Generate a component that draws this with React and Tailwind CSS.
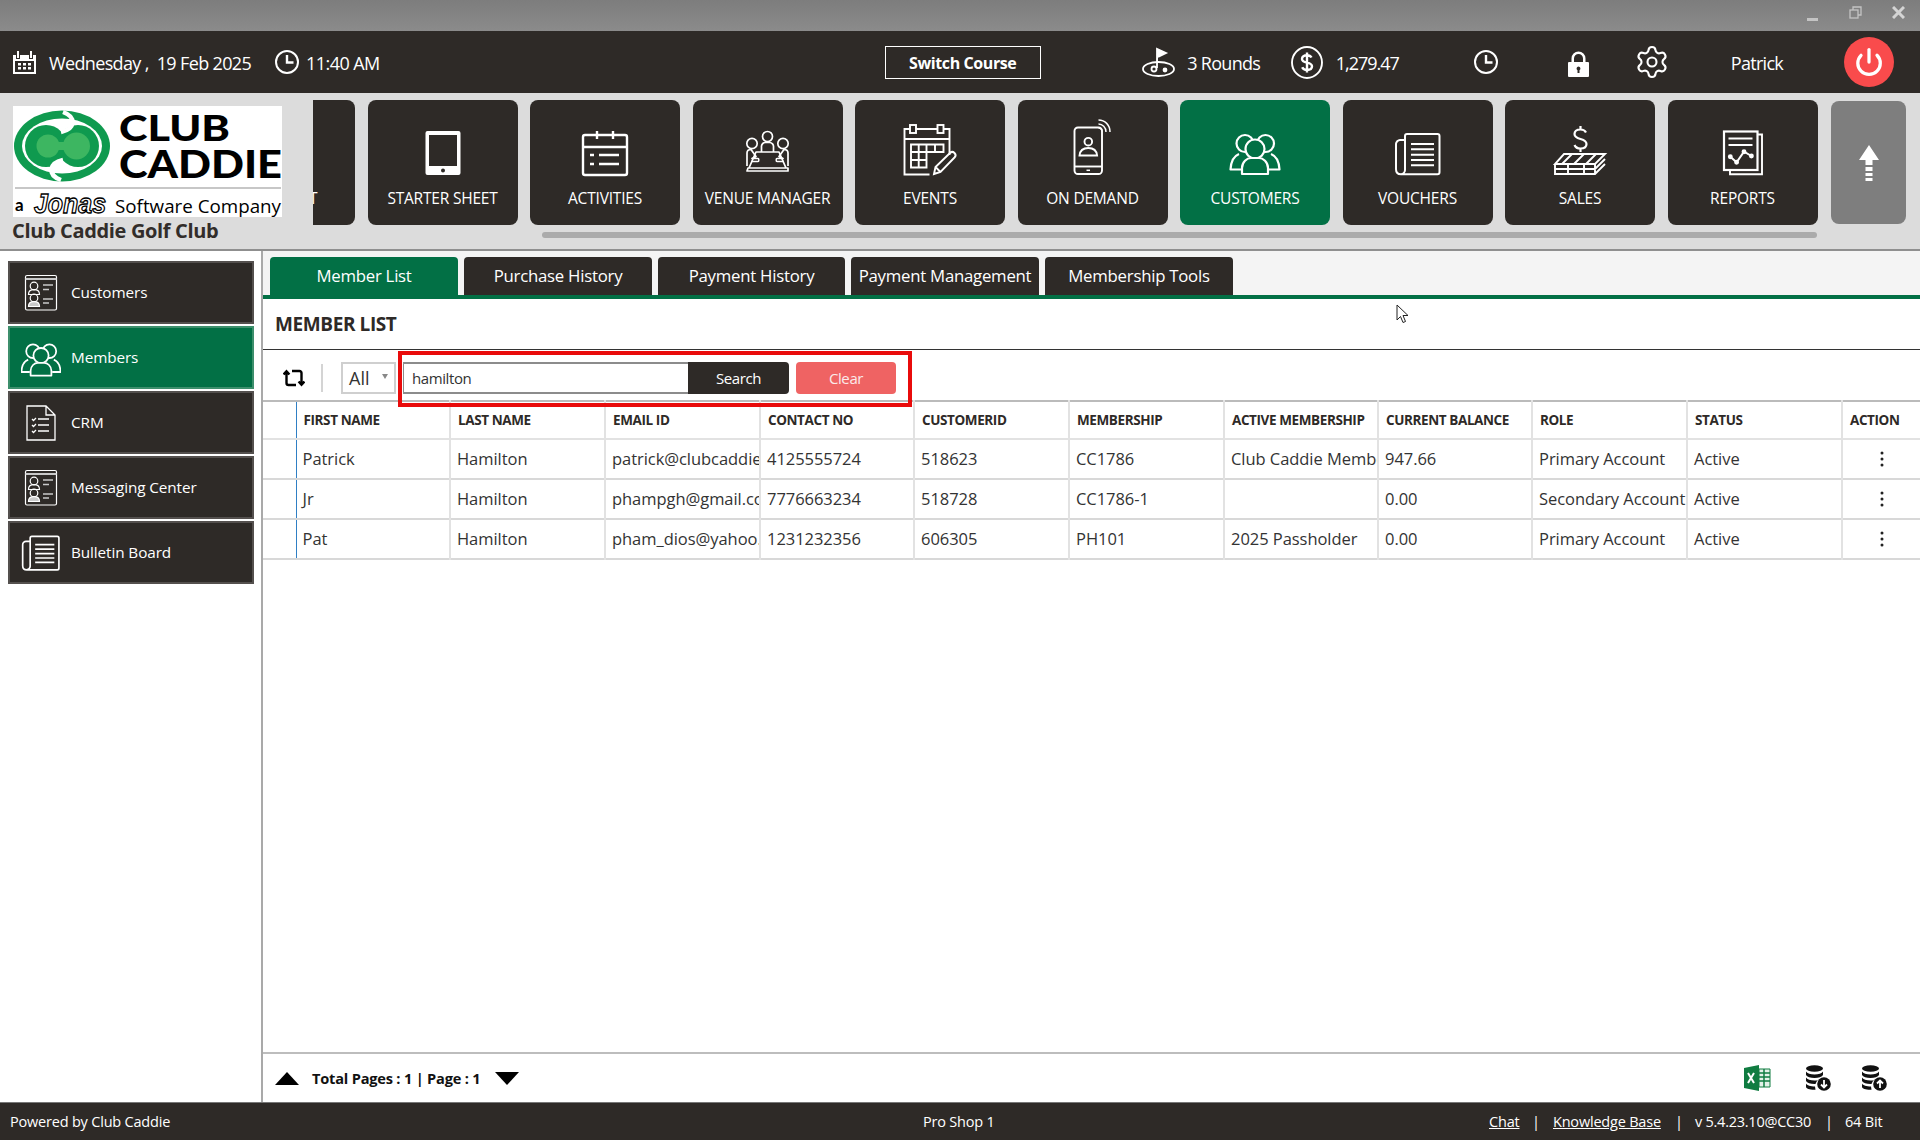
import { Power, Settings } from 'lucide-react';

const dark = 'bg-[#2e2a27]';

// Icones do menu principal (caixa de 60x60)
const StarterIcon = () => (
  <svg viewBox="0 0 60 60" className="w-[60px] h-[60px]" fill="white">
    <path fillRule="evenodd" d="M14.5 13h31a2 2 0 0 1 2 2v40a2 2 0 0 1-2 2h-31a2 2 0 0 1-2-2V15a2 2 0 0 1 2-2zM16 17v31h28V17zM30 50.5a2 2 0 1 0 0 4a2 2 0 0 0 0-4z" />
  </svg>
);

const ActivitiesIcon = () => (
  <svg viewBox="0 0 60 60" className="w-[60px] h-[60px]" fill="none" stroke="white" strokeWidth="2.4">
    <rect x="8" y="17" width="44" height="40" rx="2" />
    <path d="M8 29h44M22 13v8M38 13v8M24 37h20M24 46h20" />
    <path d="M15 37h4M15 46h4" />
  </svg>
);

const VenueIcon = () => (
  <svg viewBox="0 0 60 60" className="w-[60px] h-[60px]" fill="none" stroke="white" strokeWidth="1.7" strokeLinejoin="round">
    <circle cx="29.5" cy="18.5" r="5" />
    <circle cx="14" cy="25.5" r="5.2" />
    <circle cx="45" cy="25.5" r="5.2" />
    <path d="M23.5 34v-5a4 4 0 0 1 4-4.5h4a4 4 0 0 1 4 4.5v5" />
    <path d="M18 34h23l7 16H11zM10 50h40v3H9z" />
    <path d="M9 48V35c0-2 1.5-3.5 4-3.5l5 7-4 2h6c1 0 1 3 0 3h-7M50 48V35c0-2-1.5-3.5-4-3.5l-5 7 4 2h-6c-1 0-1 3 0 3h7" />
  </svg>
);

const EventsIcon = () => (
  <svg viewBox="0 0 60 60" className="w-[60px] h-[60px]" fill="none" stroke="white" strokeWidth="1.9">
    <path d="M10 11H4.5v45.5h25M16 11h21M44 11h5.5v26M4.5 21h45" />
    <rect x="10" y="7" width="6" height="8" />
    <rect x="37.5" y="7" width="6" height="8" />
    <path d="M11 26.5h32.5v7.5H26.5v15.5H11zM11 34h15.5M11 42h15.5M18.7 26.5v23M26.5 26.5v7.5M35 26.5v7.5" />
    <path d="M34 56l1.5-7L50 35c1.5-1.5 3-1.5 4.5 0s1.5 3 0 4.5L40.5 54zM36 49.5l4.5 4.5" />
  </svg>
);

const OnDemandIcon = () => (
  <svg viewBox="0 0 60 60" className="w-[60px] h-[60px]" fill="none" stroke="white" strokeWidth="1.9">
    <rect x="11.5" y="9.5" width="27.5" height="46.5" rx="3.5" />
    <path d="M11.5 48.500h27.5" />
    <path d="M23.5 52.300h3.5" strokeWidth="1.5" />
    <circle cx="25.3" cy="23.7" r="3.8" />
    <path d="M16.5 37.5c.5-5 4-7.5 8.8-7.5s8.300 2.500 8.800 7.500z" />
    <path d="M35.500 2c6.500 0 11.500 5 11.500 12M35.500 6c4 0 7.500 3.500 7.500 8M35.500 10c2 0 3.500 1.500 3.500 3.500" strokeWidth="1.5" />
  </svg>
);

const CustomersIcon = ({ className = 'w-[60px] h-[60px]', viewBox = '0 0 60 60' }) => (
  <svg viewBox={viewBox} className={className} fill="none" stroke="white" strokeWidth="2.2" strokeLinejoin="round">
    <circle cx="20" cy="25.5" r="8.5" />
    <circle cx="40.5" cy="25.5" r="8.5" />
    <path d="M14 36c-5 2-8 6-8.500 15.500H16M46 36c5 2 8 6 8.500 15.500H44" />
    <circle cx="30" cy="31" r="9.5" fill="#027045" />
    <path d="M17 56v-6c0-6 5-10 9-10h8c4 0 9 4 9 10v6z" fill="#027045" />
  </svg>
);

const VouchersIcon = ({ className = 'w-[60px] h-[60px]', viewBox = '0 0 60 60' }) => (
  <svg viewBox={viewBox} className={className} fill="none" stroke="white" strokeWidth="2">
    <path d="M17 22V18a2 2 0 0 1 2-2h30.500a2 2 0 0 1 2 2v36.300a2 2 0 0 1-2 2H13c-3 0-5-2-5-5V26c0-2 2-4 4-4h5v30c0 2-2 4-4 4.300" />
    <path d="M23 26h23M23 31.300h23M23 36.700h23M23 42h23M23 47.300h23" />
  </svg>
);

const SalesIcon = () => (
  <svg viewBox="0 0 60 60" className="w-[60px] h-[60px]" fill="none" stroke="white" strokeWidth="1.9">
    <path d="M36 14.500c-1-2-3-3-5.500-3-3.500 0-6 1.500-6 4.500 0 6.500 12 3.500 12 10 0 3-2.500 4.500-6 4.500-3 0-5-1-6-3.500M30.500 8v3.500M30.500 30.500v3.500" strokeWidth="2.2" />
    <path d="M14 36h41L45 46H5zM22 36l-10 10M34 36l-10 10M46 36l-10 10" />
    <path d="M5 46v5h40l10-10M5 51v5h40l10-10M18 46v10M34 46v10M45 46v10" />
  </svg>
);

const ReportsIcon = () => (
  <svg viewBox="0 0 60 60" className="w-[60px] h-[60px]" fill="none" stroke="white" strokeWidth="1.9">
    <rect x="11" y="13.5" width="33.5" height="38.5" strokeWidth="2.2" />
    <path d="M44.500 16.500h4.500v39.700h-32v-4" />
    <path d="M15.500 20.500h24M15.500 27h24" />
    <path d="M17.300 38.700l6.300 5.600L31 33.700l7.400 4.300" strokeWidth="2" />
    <circle cx="17.3" cy="38.7" r="1.5" fill="white" />
    <circle cx="23.6" cy="44.3" r="1.5" fill="white" />
    <circle cx="31" cy="33.7" r="1.5" fill="white" />
    <circle cx="38.4" cy="38" r="1.5" fill="white" />
  </svg>
);

const navItems = [
  { label: 'STARTER SHEET', Icon: StarterIcon },
  { label: 'ACTIVITIES', Icon: ActivitiesIcon },
  { label: 'VENUE MANAGER', Icon: VenueIcon },
  { label: 'EVENTS', Icon: EventsIcon },
  { label: 'ON DEMAND', Icon: OnDemandIcon },
  { label: 'CUSTOMERS', Icon: CustomersIcon, active: true },
  { label: 'VOUCHERS', Icon: VouchersIcon },
  { label: 'SALES', Icon: SalesIcon },
  { label: 'REPORTS', Icon: ReportsIcon },
];

// Icones da barra lateral
const CardIcon = () => (
  <svg viewBox="0 0 40 40" className="w-10 h-10" fill="none" stroke="white" strokeWidth="1.2">
    <rect x="4.5" y="2.5" width="31" height="34.5" rx="1.5" />
    <path d="M4.500 6h31" strokeWidth="2" stroke="#c9c9c9" />
    <circle cx="13" cy="13" r="3.8" />
    <path d="M7.500 21.500c0-3.500 2-4.800 5.500-4.800s5.500 1.300 5.500 4.800z" />
    <circle cx="13" cy="25" r="3.8" />
    <path d="M7.500 33.500c0-3.500 2-4.800 5.500-4.800s5.500 1.300 5.500 4.800z" fill="#c9c9c9" />
    <path d="M22 12h10M22 16.500h6" strokeWidth="1.5" stroke="#c9c9c9" />
    <path d="M22 26h10M22 30h6" strokeWidth="1.5" stroke="#c9c9c9" />
  </svg>
);

const CrmIcon = () => (
  <svg viewBox="0 0 40 40" className="w-10 h-10" fill="none" stroke="white" strokeWidth="1.3">
    <path d="M6 3h19l9 9v25H6zM25 3v9h9" />
    <path d="M17 16h11M17 22h11M17 28h11" />
    <path d="M11 16l1.500 1.500 2.500-2.500M11 22l1.500 1.500 2.500-2.500M11 28l1.500 1.500 2.500-2.500" />
  </svg>
);

const sideItems = [
  { label: 'Customers', icon: <CardIcon /> },
  { label: 'Members', icon: <CustomersIcon className="w-10 h-10" viewBox="5 9 50 50" />, active: true },
  { label: 'CRM', icon: <CrmIcon /> },
  { label: 'Messaging Center', icon: <CardIcon /> },
  { label: 'Bulletin Board', icon: <VouchersIcon className="w-10 h-10" viewBox="6 12 48 48" /> },
];

const tabs = [
  { label: 'Member List', w: 'w-[188px]', active: true },
  { label: 'Purchase History', w: 'w-[188px]' },
  { label: 'Payment History', w: 'w-[187px]' },
  { label: 'Payment Management', w: 'w-[188px]' },
  { label: 'Membership Tools', w: 'w-[188px]' },
];

const columns = [
  { label: 'FIRST NAME', w: 'w-[154px]' },
  { label: 'LAST NAME', w: 'w-[155px]' },
  { label: 'EMAIL ID', w: 'w-[155px]' },
  { label: 'CONTACT NO', w: 'w-[154px]' },
  { label: 'CUSTOMERID', w: 'w-[155px]' },
  { label: 'MEMBERSHIP', w: 'w-[155px]' },
  { label: 'ACTIVE MEMBERSHIP', w: 'w-[154px]' },
  { label: 'CURRENT BALANCE', w: 'w-[154px]' },
  { label: 'ROLE', w: 'w-[155px]' },
  { label: 'STATUS', w: 'w-[155px]' },
  { label: 'ACTION', w: 'w-[78px]' },
];

const rows = [
  ['Patrick', 'Hamilton', 'patrick@clubcaddie.com', '4125555724', '518623', 'CC1786', 'Club Caddie Membership', '947.66', 'Primary Account', 'Active'],
  ['Jr', 'Hamilton', 'phampgh@gmail.com', '7776663234', '518728', 'CC1786-1', '', '0.00', 'Secondary Account', 'Active'],
  ['Pat', 'Hamilton', 'pham_dios@yahoo.com', '1231232356', '606305', 'PH101', '2025 Passholder', '0.00', 'Primary Account', 'Active'],
];

const ClockIcon = () => (
  <svg viewBox="0 0 24 24" className="w-6 h-6" fill="none" stroke="white" strokeWidth="2">
    <circle cx="12" cy="12" r="11" />
    <path d="M12 5v7.500h6.500" strokeWidth="2.4" />
  </svg>
);

const DbIcon = ({ up }) => (
  <svg viewBox="0 0 26 26" className="w-[26px] h-[26px]">
    <ellipse cx="9.5" cy="3.5" rx="8.5" ry="3.2" fill="#111" />
    <path d="M1 6.500c1 2 4.500 3 8.500 3s7.500-1 8.500-3v3.500c-1 2-4.500 3-8.500 3S2 12 1 10zM1 12.500c1 2 4.500 3 8.500 3 1.500 0 2.500 0 3.500-.5-1 1-2 2.500-2.500 4H9.500c-4 0-7.500-1-8.500-3zM1 18.500c1 2 4.500 3 9 3l.5 3.200c-5 .3-9.500-1-9.500-3z" fill="#111" />
    <circle cx="19" cy="19" r="6.8" fill="#111" />
    <path d={up ? 'M19 23v-7M16 18.500l3-3 3 3' : 'M19 15v7M16 19.500l3 3 3-3'} stroke="white" strokeWidth="1.8" fill="none" />
  </svg>
);

export default function App() {
  return (
    <div className="w-[1920px] h-[1140px] flex flex-col overflow-hidden relative bg-white font-['Open_Sans',sans-serif]">
      {/* barra da janela */}
      <div className="h-[31px] shrink-0 bg-gradient-to-b from-[#7d7d7d] to-[#8b8b8b] flex items-center justify-end">
        <div className="w-[11px] h-[3px] bg-[#c4c4c4] mt-[7px]"></div>
        <svg viewBox="0 0 13 13" className="w-[13px] h-[13px] ml-[31px] mb-[7px]" fill="none" stroke="#c4c4c4" strokeWidth="1.3">
          <rect x="1" y="4" width="8" height="8" />
          <path d="M4 4V1h8v8H9" />
        </svg>
        <svg viewBox="0 0 13 13" className="w-[13px] h-[13px] ml-[30px] mr-[15px] mb-[7px]" fill="none" stroke="#d4d4d4" strokeWidth="3">
          <path d="M1 1l11 11M12 1L1 12" />
        </svg>
      </div>

      {/* cabecalho */}
      <div className={`h-[62px] shrink-0 ${dark} text-white flex items-center text-[18px] relative`}>
        <svg viewBox="0 0 23 24" className="w-[23px] h-6 ml-[13px]" fill="white">
          <path fillRule="evenodd" d="M0 5h3v4h4V5h9v4h4V5h3v19H0zM2 11v11h19V11zM4 1h2v7H4zM17 1h2v7h-2z" />
          <path d="M5 13h3v2.500H5zM10 13h3v2.500h-3zM15 13h3v2.500h-3zM5 17h3v2.500H5zM10 17h3v2.500h-3zM15 17h3v2.500h-3z" />
        </svg>
        <span className="ml-[13px] w-[226px] pt-[2px] whitespace-pre tracking-[-0.65px]">Wednesday ,  19 Feb 2025</span>
        <ClockIcon />
        <span className="ml-[7px] pt-[2px] tracking-[-0.55px]">11:40 AM</span>
        <button className="ml-[505px] w-[156px] h-[33px] pt-[1px] border border-white text-[16px] font-bold tracking-[-0.4px]">Switch Course</button>
        <svg viewBox="0 0 33 30" className="w-[33px] h-[30px] ml-[101px]" fill="none" stroke="white" strokeWidth="1.8">
          <path d="M15 21V2l9 4-8 4" fill="white" />
          <ellipse cx="16.5" cy="22" rx="15.5" ry="7" />
          <circle cx="12" cy="22" r="2.5" />
          <circle cx="23" cy="23" r="1.5" fill="white" />
        </svg>
        <span className="ml-[12.5px] w-[103.5px] pt-[2px] tracking-[-0.7px]">3 Rounds</span>
        <svg viewBox="0 0 32 33" className="w-8 h-[33px]" fill="none" stroke="white">
          <ellipse cx="16" cy="16.5" rx="15" ry="15.5" strokeWidth="1.9" />
          <path d="M20.500 11.500c-.8-1.500-2.500-2.300-4.500-2.300-3 0-5 1.300-5 3.700 0 5 10 2.500 10 7.400 0 2.400-2 3.700-5 3.700-2.200 0-4-.9-4.800-2.700M16 6.500v20" strokeWidth="2.4" />
        </svg>
        <span className="ml-[13px] w-[138px] pt-[2px] tracking-[-1px]">1,279.47</span>
        <ClockIcon />
        <svg viewBox="0 0 21 26" className="w-[21px] h-[26px] ml-[70px] mt-[3px]" fill="white">
          <path fillRule="evenodd" d="M1 11h2.500V7.500a7 7 0 0 1 14 0V11H20a1 1 0 0 1 1 1v13a1 1 0 0 1-1 1H1a1 1 0 0 1-1-1V12a1 1 0 0 1 1-1zM6 11h9V7.500a4.500 4.500 0 0 0-9 0zM10.500 15.500a2 2 0 0 0-1 3.700V22h2v-2.800a2 2 0 0 0-1-3.700z" />
        </svg>
        <Settings size={36} strokeWidth={1.4} className="ml-[45px]" />
        <span className="ml-[61px] w-[113.5px] pt-[2px] tracking-[-0.7px]">Patrick</span>
        <div className="w-[50px] h-[50px] rounded-full bg-[#f94b4c] flex items-center justify-center">
          <Power size={30} strokeWidth={2.6} />
        </div>
      </div>

      {/* menu principal */}
      <div className="h-[158px] shrink-0 bg-[#dcdcdc] border-b-2 border-[#8f8f8f] flex">
        <div className="w-[313px] shrink-0 pl-[13px] pt-[13px]">
          <svg viewBox="0 0 269 111" className="w-[269px] h-[111px] bg-white block">
            <ellipse cx="49" cy="40" rx="48" ry="35.5" fill="#0f9a4f" />
            <ellipse cx="49" cy="40" rx="40" ry="27.5" fill="white" />
            <circle cx="33" cy="40" r="21" fill="#0f9a4f" />
            <circle cx="65" cy="40" r="21" fill="#0f9a4f" />
            <circle cx="35" cy="40" r="11.5" fill="#3db661" />
            <circle cx="63.5" cy="40" r="13.5" fill="#3db661" />
            <path d="M35 36h28v8H35z" fill="#3db661" />
            <path d="M50 6c14 5 12 17-2 20M48 74c-14-5-12-17 2-20" fill="none" stroke="white" strokeWidth="4.5" />
            <text x="106" y="34.5" fontFamily="Lato, sans-serif" fontWeight="900" fontSize="36" textLength="111" lengthAdjust="spacingAndGlyphs">CLUB</text>
            <text x="106" y="72" fontFamily="Lato, sans-serif" fontWeight="900" fontSize="37" textLength="163" lengthAdjust="spacingAndGlyphs">CADDIE</text>
            <path d="M2 82h266" stroke="#b5b5b5" strokeWidth="1.6" />
            <text x="2" y="105" fontFamily="Lato, sans-serif" fontWeight="700" fontSize="17">a</text>
            <text x="21" y="107" fontFamily="Liberation Sans, sans-serif" fontStyle="italic" fontWeight="700" fontSize="27" fill="white" stroke="black" strokeWidth="1.3" textLength="72" lengthAdjust="spacingAndGlyphs">Jonas</text>
            <text x="102" y="107" fontFamily="Open Sans, sans-serif" fontSize="17.5" textLength="166" lengthAdjust="spacingAndGlyphs">Software Company</text>
          </svg>
          <div className="mt-[2px] ml-[-1px] text-[20px] leading-[24px] font-bold text-[#322d2a] tracking-[-0.35px] whitespace-nowrap">Club Caddie Golf Club</div>
        </div>

        <div className="pt-[7px]">
          <div className="flex gap-[12.5px]">
            <div className={`w-[42px] h-[125px] ${dark} rounded-r-lg overflow-hidden text-white text-[15.5px] pt-[87px]`}>
              <span className="block ml-[-4px] leading-[22px]">T</span>
            </div>
            {navItems.map(({ label, Icon, active }) => (
              <div
                key={label}
                className={`w-[150px] h-[125px] rounded-lg flex flex-col items-center pt-[18px] ${active ? 'bg-[#027045]' : dark}`}
              >
                <Icon />
                <span className="mt-[9px] text-[15.5px] leading-[22px] text-white tracking-[-0.2px] whitespace-nowrap">{label}</span>
              </div>
            ))}
          </div>
          {/* barra de rolagem */}
          <div className="ml-[229px] mt-[7px] w-[1275px] h-[6px] rounded-full bg-[#ababab]"></div>
        </div>

        <div className="ml-[13.5px] mt-[8px] w-[75px] h-[123px] rounded-lg bg-[#7e7e7e] flex items-center justify-center">
          <svg viewBox="0 0 20 36" className="w-5 h-9" fill="white">
            <path d="M10 0l10 15h-6.500v5h-7v-5H0zM6.500 22h7v4h-7zM6.500 28h7v3h-7zM6.500 33h7v3h-7z" />
          </svg>
        </div>
      </div>

      <div className="flex-1 min-h-0 flex">
        {/* barra lateral */}
        <div className="w-[263px] shrink-0 border-r-2 border-[#a9a9a9] pl-2 pt-[10px] flex flex-col gap-[2px]">
          {sideItems.map((item) => (
            <div
              key={item.label}
              className={`w-[246px] h-[63px] flex items-center border-2 pl-[11px] text-[15.3px] tracking-[-0.1px] ${item.active ? 'bg-[#027045] border-[#3d8f6c]' : `${dark} border-[#54504e]`}`}
            >
              {item.icon}
              <span className="ml-[10px] text-white">{item.label}</span>
            </div>
          ))}
        </div>

        <div className="flex-1 min-w-0 flex flex-col">
          {/* abas */}
          <div className="h-[48px] shrink-0 bg-[#f4f4f4] border-b-4 border-[#027045] pt-[6px] pl-[7px] flex gap-[6px]">
            {tabs.map((t) => (
              <div key={t.label} className={`${t.w} h-[38px] rounded-t flex items-center justify-center text-white text-[16.8px] tracking-[-0.25px] whitespace-nowrap ${t.active ? 'bg-[#027045]' : dark}`}>
                {t.label}
              </div>
            ))}
          </div>

          <div className="h-[51px] shrink-0 border-b border-[#333] pl-3 flex items-center text-[19px] font-bold text-[#2e2a27] tracking-[-0.4px]">
            MEMBER LIST
          </div>

          {/* ferramentas */}
          <div className="h-[50px] shrink-0 pt-[6px] flex items-center">
            <svg viewBox="0 0 22 18" className="ml-[20px] w-[22px] h-[18px]" fill="none" stroke="black" strokeWidth="2.4">
              <path d="M3.500 3v11a2 2 0 0 0 2 2H13M.6 5.500l2.900-3.300 2.900 3.300" />
              <path d="M18.500 15V4a2 2 0 0 0-2-2H9M15.600 12.500l2.900 3.300 2.900-3.300" />
            </svg>
            <div className="ml-[16px] w-[2px] h-[28px] bg-[#d4d4d4]"></div>
            <div className="ml-[18px] w-[55px] h-[32px] border-2 border-[#cfcfcf] flex items-center pl-[6px] text-[18px] text-[#333] relative">
              All
              <span className="absolute right-[6px] top-[10px] w-0 h-0 border-l-[3.5px] border-r-[3.5px] border-t-[5px] border-l-transparent border-r-transparent border-t-[#888]"></span>
            </div>
            <div className="ml-[7px] flex h-[32px] relative">
              <div className="w-[285px] border-y-2 border-l border-[#8c8c8c] pl-[8px] flex items-center text-[15px] text-[#333] tracking-[-0.4px]">hamilton</div>
              <button className={`w-[101px] ${dark} rounded-r text-white text-[15px] tracking-[-0.4px]`}>Search</button>
              <button className="ml-[7px] w-[100px] bg-[#ef6363] rounded text-[#fbeaea] text-[15px] tracking-[-0.4px]">Clear</button>
              {/* destaque vermelho */}
              <div className="absolute left-[-5px] top-[-11px] w-[514px] h-[56px] border-[4px] border-[#e90b0b] pointer-events-none"></div>
            </div>
          </div>

          {/* tabela */}
          <table className="table-fixed w-[1657px] border-t-2 border-[#bbb] text-[#333]">
            <thead>
              <tr className="h-[38px] border-b-2 border-[#e2e2e2]">
                <th className="w-[33px] border-r border-[#2f7fc4] p-0"></th>
                {columns.map((c) => (
                  <th key={c.label} className={`${c.w} border-r-2 last:border-r-0 border-[#e2e2e2] pl-[7px] pr-0 text-left text-[13.5px] font-bold text-[#2e2a27] tracking-[-0.4px] whitespace-nowrap overflow-hidden`}>
                    {c.label}
                  </th>
                ))}
              </tr>
            </thead>
            <tbody>
              {rows.map((row) => (
                <tr key={row[0]} className="h-[40px] border-b-2 border-[#d8d8d8]">
                  <td className="border-r border-[#2f7fc4] p-0"></td>
                  {row.map((val, i) => (
                    <td key={i} className="border-r-2 border-[#e2e2e2] pl-[6px] pr-[3px] text-[16.5px] tracking-[-0.05px] whitespace-nowrap overflow-hidden">
                      {val}
                    </td>
                  ))}
                  <td className="p-0">
                    <svg viewBox="0 0 6 18" className="w-[6px] h-[18px] mx-auto" fill="#222">
                      <circle cx="3" cy="3" r="1.5" />
                      <circle cx="3" cy="9" r="1.5" />
                      <circle cx="3" cy="15" r="1.5" />
                    </svg>
                  </td>
                </tr>
              ))}
            </tbody>
          </table>

          <div className="flex-1"></div>

          {/* paginacao */}
          <div className="h-[50px] shrink-0 border-t-2 border-[#bdbdbd] flex items-center">
            <svg viewBox="0 0 24 13" className="w-6 h-[13px] ml-[12px]"><path d="M12 0l12 13H0z" fill="black" /></svg>
            <span className="ml-[13px] pt-[1px] text-[14.6px] font-bold text-[#111] tracking-[-0.2px]">Total Pages : 1 | Page : 1</span>
            <svg viewBox="0 0 24 13" className="w-6 h-[13px] ml-[15px]"><path d="M0 0h24L12 13z" fill="black" /></svg>
            <div className="flex-1"></div>
            <svg viewBox="0 0 27 26" className="w-[27px] h-[26px]">
              <path d="M0 3l15-3v26L0 23z" fill="#107c41" />
              <path d="M15 4h11v18H15z" fill="#e3f1e8" stroke="#107c41" />
              <path d="M15 8h11M15 12h11M15 16h11M20 4v18" stroke="#107c41" strokeWidth="1.5" />
              <path d="M4 8l6 10M10 8l-6 10" stroke="white" strokeWidth="2" />
            </svg>
            <div className="ml-[34px]"><DbIcon /></div>
            <div className="ml-[30px] mr-[33px]"><DbIcon up /></div>
          </div>
        </div>
      </div>

      {/* rodape */}
      <div className={`h-[38px] shrink-0 ${dark} border-t border-[#777] text-white text-[14.5px] tracking-[-0.2px] flex items-center`}>
        <span className="ml-[10px] w-[913px]">Powered by Club Caddie</span>
        <span className="w-[566px]">Pro Shop 1</span>
        <span className="underline w-[43px]">Chat</span>
        <span className="w-[21px]">|</span>
        <span className="underline w-[122px]">Knowledge Base</span>
        <span className="w-[20px]">|</span>
        <span className="w-[130px] tracking-[-0.25px]">v 5.4.23.10@CC30</span>
        <span className="w-[20px]">|</span>
        <span>64 Bit</span>
      </div>

      {/* cursor do mouse */}
      <svg viewBox="0 0 13 20" className="absolute left-[1396px] top-[304px] w-[13px] h-5" fill="white" stroke="#222" strokeWidth="1">
        <path d="M1 1v15l3.500-3.500 2.500 6 2.500-1-2.500-6H12z" />
      </svg>
    </div>
  );
}
